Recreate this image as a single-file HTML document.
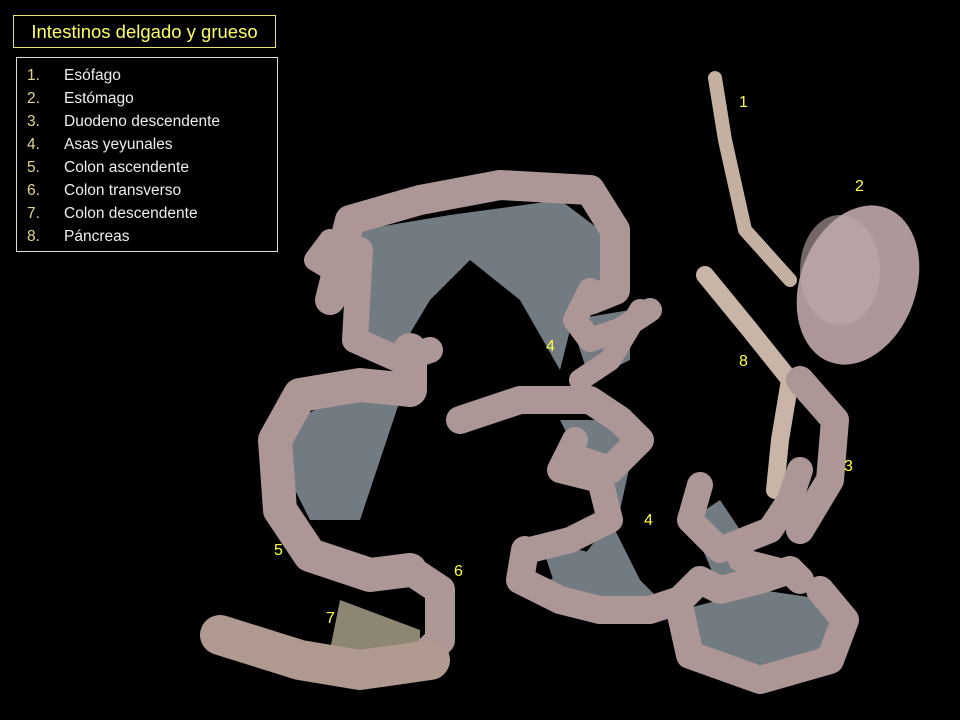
<!DOCTYPE html>
<html><head><meta charset="utf-8"><style>
html,body{margin:0;padding:0;background:#000;}
body{width:960px;height:720px;position:relative;overflow:hidden;font-family:"Liberation Sans",sans-serif;}
.title{position:absolute;left:13px;top:15px;width:261px;height:31px;border:1px solid #e8e070;color:#ffff66;font-size:18.5px;line-height:31px;text-align:center;}
.list{position:absolute;left:16px;top:57px;width:260px;height:193px;border:1px solid #ddd;}
.row{position:absolute;left:10px;font-size:15.5px;color:#eee;}
.row b{font-weight:normal;color:#e0d890;display:inline-block;width:37px;}
.lab{position:absolute;color:#ffff44;font-size:16px;}
svg{position:absolute;left:0;top:0;}
</style></head><body>
<svg width="960" height="720" viewBox="0 0 960 720">
<g fill="#8f9aa2" opacity="0.8">
<path d="M360,230 L450,215 L560,200 L600,230 L600,300 L570,330 L560,370 L520,300 L470,260 L430,300 L400,350 L350,350 Z"/>
<path d="M280,430 L340,395 L400,400 L380,460 L360,520 L310,520 L290,480 Z"/>
<path d="M560,420 L640,420 L620,510 L580,560 L550,580 L600,610 L650,600 Z"/>
<path d="M540,540 L620,560 L660,600 L600,620 L560,600 Z"/>
<path d="M690,520 L720,500 L760,560 L720,590 Z"/>
<path d="M680,610 L760,590 L830,600 L840,650 L760,670 L690,640 Z"/>
<path d="M570,320 L630,310 L630,360 L590,380 Z"/>
<path d="M340,600 L420,630 L420,660 L330,650 Z" fill="#b0a890"/>
</g>
<g fill="none" stroke="#ad9696" stroke-linecap="round" stroke-linejoin="round">
<path d="M715,78 L725,140 L745,230 L790,280" stroke-width="14" stroke="#c4b0a0"/>
<path d="M705,275 L750,330 L790,380 L780,440 L775,490" stroke-width="18" stroke="#c8b5a8"/>
<path d="M800,380 L835,420 L830,480 L800,530" stroke-width="28"/>
<path d="M330,300 L350,220 L420,200 L500,185 L590,190 L615,230 L615,290 L590,300" stroke-width="30"/>
<path d="M330,240 L315,260 L340,275" stroke-width="22"/>
<path d="M360,250 L355,340 L400,360 L430,350" stroke-width="26"/>
<path d="M590,290 L575,320 L590,340 L620,330 L650,310" stroke-width="24"/>
<path d="M640,310 L610,360 L580,380" stroke-width="22"/>
<path d="M410,350 L410,390 L360,385 L300,395 L275,440 L280,510 L310,555 L370,575 L410,570" stroke-width="34"/>
<path d="M410,570 L440,590 L440,640 L420,660" stroke-width="30"/>
<path d="M220,635 L300,660 L360,670 L430,660" stroke-width="40" stroke="#b0998f"/>
<path d="M460,420 L520,400 L590,400 L620,420 L640,440 L610,470 L580,460" stroke-width="28"/>
<path d="M575,440 L560,470 L600,480 L610,520 L570,540 L530,550" stroke-width="26"/>
<path d="M525,550 L520,580 L560,600 L600,610 L650,610 L680,600 L700,580 L720,590 L760,580 L790,570 L800,580" stroke-width="28"/>
<path d="M700,485 L690,520 L720,550 L770,530 L790,500 L800,470" stroke-width="26"/>
<path d="M680,610 L690,655 L760,680 L830,660 L845,620 L820,590" stroke-width="28"/>
<path d="M740,560 L780,570" stroke-width="24"/>
</g>
<ellipse cx="858" cy="285" rx="58" ry="82" transform="rotate(20 858 285)" fill="#ad9799"/>
<ellipse cx="840" cy="270" rx="40" ry="55" fill="#c0abab" opacity="0.6"/>
</svg>
<div class="title">Intestinos delgado y grueso</div>
<div class="list">
<div class="row" style="top:9px"><b>1.</b>Esófago</div>
<div class="row" style="top:32px"><b>2.</b>Estómago</div>
<div class="row" style="top:55px"><b>3.</b>Duodeno descendente</div>
<div class="row" style="top:78px"><b>4.</b>Asas yeyunales</div>
<div class="row" style="top:101px"><b>5.</b>Colon ascendente</div>
<div class="row" style="top:124px"><b>6.</b>Colon transverso</div>
<div class="row" style="top:147px"><b>7.</b>Colon descendente</div>
<div class="row" style="top:170px"><b>8.</b>Páncreas</div>
</div>
<div class="lab" style="left:739px;top:94px">1</div>
<div class="lab" style="left:855px;top:178px">2</div>
<div class="lab" style="left:844px;top:458px">3</div>
<div class="lab" style="left:546px;top:338px">4</div>
<div class="lab" style="left:644px;top:512px">4</div>
<div class="lab" style="left:274px;top:542px">5</div>
<div class="lab" style="left:454px;top:563px">6</div>
<div class="lab" style="left:326px;top:610px">7</div>
<div class="lab" style="left:739px;top:353px">8</div>
</body></html>
